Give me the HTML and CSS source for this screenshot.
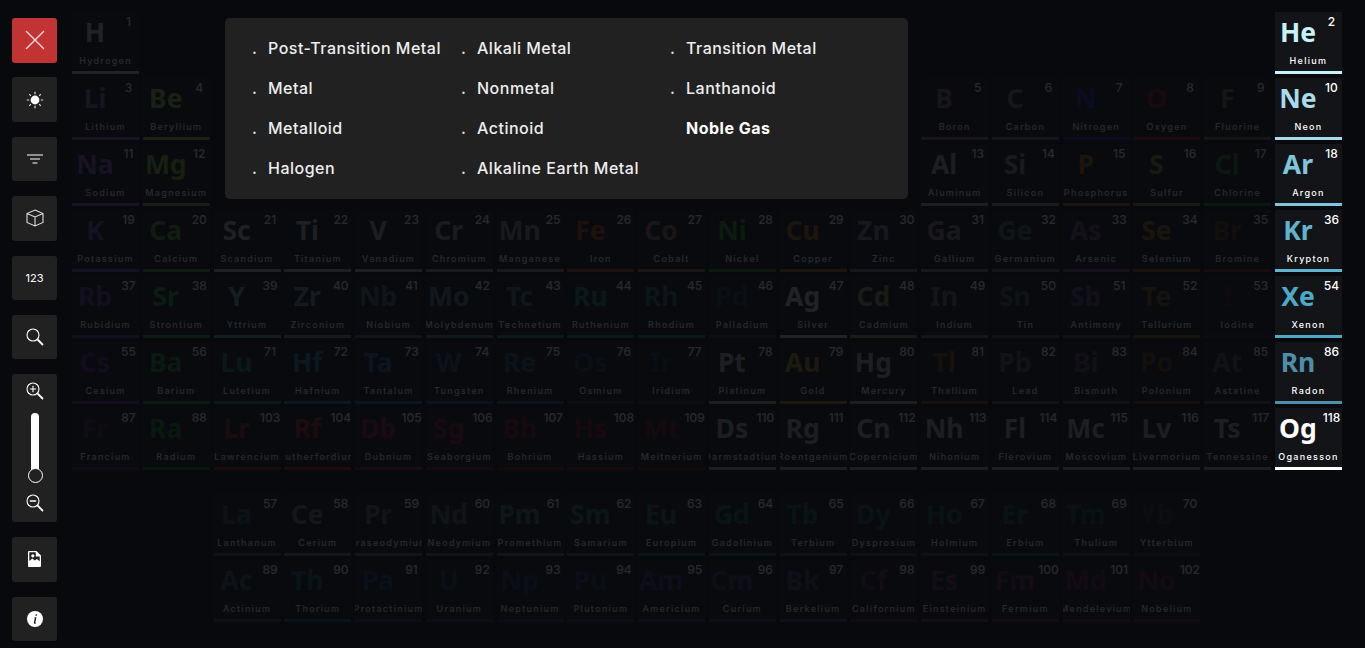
FILE: index.html
```html
<!DOCTYPE html>
<html lang="en">
<head>
<meta charset="utf-8">
<title>Periodic Table</title>
<link rel="stylesheet" href="styles.css">
</head>
<body>
<div class="page">
<aside class="sidebar">
  <button class="tool tool-close"><svg width="22" height="22" viewBox="0 0 22 22"><path d="M2 2 20 20M20 2 2 20" stroke="#f3dcdc" stroke-width="1.4" fill="none"/></svg></button>
  <button class="tool"><svg width="18" height="18" viewBox="0 0 18 18"><circle cx="9" cy="9" r="4.4" fill="#fff"/><path d="M9 .8v2.4M9 14.8v2.4M.8 9h2.4M14.8 9h2.4M3.2 3.2l1.7 1.7M13.1 13.1l1.7 1.7M14.8 3.2l-1.7 1.700M4.9 13.1l-1.7 1.7" stroke="#ddd" stroke-width="1.2"/></svg></button>
  <button class="tool"><svg width="16" height="10" viewBox="0 0 16 10"><path d="M0 1h16M3 5h10M5.500 9h5" stroke="#fff" stroke-width="1.100"/></svg></button>
  <button class="tool"><svg width="18" height="18" viewBox="0 0 18 18" fill="none" stroke="#ddd" stroke-width="1.1"><path d="M9 1 17 4.500v9L9 17 1 13.500v-9zM1 4.500 9 8l8-3.500M9 8v9"/></svg></button>
  <button class="tool tool-text">123</button>
  <button class="tool"><svg width="18" height="18" viewBox="0 0 18 18" fill="none" stroke="#fff"><circle cx="7" cy="7" r="6" stroke-width="1.100"/><path d="M11.500 11.500 17 17" stroke-width="1.800"/></svg></button>
  <div class="tool zoom-panel">
    <svg width="18" height="18" viewBox="0 0 18 18" fill="none" stroke="#fff"><circle cx="7" cy="7" r="6" stroke-width="1.100"/><path d="M11.500 11.500 17 17" stroke-width="1.800"/><path d="M3.800 7h6.400M7 3.800v6.400" stroke-width="1.100"/></svg>
    <div class="slider"><span class="slider-track"></span><span class="slider-thumb"></span></div>
    <svg width="18" height="18" viewBox="0 0 18 18" fill="none" stroke="#fff"><circle cx="7" cy="7" r="6" stroke-width="1.100"/><path d="M11.500 11.500 17 17" stroke-width="1.800"/><path d="M3.800 7h6.400" stroke-width="1.500"/></svg>
  </div>
  <button class="tool"><svg width="13" height="16" viewBox="0 0 13 16"><path fill="#fff" fill-rule="evenodd" d="M1 0h7.500L13 4.500V15a1 1 0 0 1-1 1H1a1 1 0 0 1-1-1V1a1 1 0 0 1 1-1zM1.300 1.300V10l3-2.500 2.500 2 2-1.500 2.900 2.300V5.400H7.800V1.300z"/><circle cx="4.800" cy="4.800" r="1.600" fill="#fff"/></svg></button>
  <button class="tool"><svg width="16" height="16" viewBox="0 0 16 16"><circle cx="8" cy="8" r="8" fill="#fff"/><path fill="#212121" d="M8.700 3.300h1.400l-.3 1.400H8.400zM8 6.300h1.400l-1 5.300c-.1.300.2.400.6.200l-.1.700c-1.100.5-2.100.4-2-.800l.8-4.700h-.8z"/></svg></button>
</aside>
<main class="table">
  <div class="grid">
    <div class="el dim c-h"><div class="top"><b>H</b><i>1</i></div><p><span>Hydrogen</span></p></div>
    <div class="el hi col-18 c-he"><div class="top"><b>He</b><i>2</i></div><p><span>Helium</span></p></div>
    <div class="el dim c-li"><div class="top"><b>Li</b><i>3</i></div><p><span>Lithium</span></p></div>
    <div class="el dim c-be"><div class="top"><b>Be</b><i>4</i></div><p><span>Beryllium</span></p></div>
    <div class="el dim col-13 c-b"><div class="top"><b>B</b><i>5</i></div><p><span>Boron</span></p></div>
    <div class="el dim c-c"><div class="top"><b>C</b><i>6</i></div><p><span>Carbon</span></p></div>
    <div class="el dim c-n"><div class="top"><b>N</b><i>7</i></div><p><span>Nitrogen</span></p></div>
    <div class="el dim c-o"><div class="top"><b>O</b><i>8</i></div><p><span>Oxygen</span></p></div>
    <div class="el dim c-f"><div class="top"><b>F</b><i>9</i></div><p><span>Fluorine</span></p></div>
    <div class="el hi c-ne"><div class="top"><b>Ne</b><i>10</i></div><p><span>Neon</span></p></div>
    <div class="el dim c-na"><div class="top"><b>Na</b><i>11</i></div><p><span>Sodium</span></p></div>
    <div class="el dim c-mg"><div class="top"><b>Mg</b><i>12</i></div><p><span>Magnesium</span></p></div>
    <div class="el dim col-13 c-al"><div class="top"><b>Al</b><i>13</i></div><p><span>Aluminum</span></p></div>
    <div class="el dim c-si"><div class="top"><b>Si</b><i>14</i></div><p><span>Silicon</span></p></div>
    <div class="el dim c-p"><div class="top"><b>P</b><i>15</i></div><p><span>Phosphorus</span></p></div>
    <div class="el dim c-s"><div class="top"><b>S</b><i>16</i></div><p><span>Sulfur</span></p></div>
    <div class="el dim c-cl"><div class="top"><b>Cl</b><i>17</i></div><p><span>Chlorine</span></p></div>
    <div class="el hi c-ar"><div class="top"><b>Ar</b><i>18</i></div><p><span>Argon</span></p></div>
    <div class="el dim c-k"><div class="top"><b>K</b><i>19</i></div><p><span>Potassium</span></p></div>
    <div class="el dim c-ca"><div class="top"><b>Ca</b><i>20</i></div><p><span>Calcium</span></p></div>
    <div class="el dim c-sc"><div class="top"><b>Sc</b><i>21</i></div><p><span>Scandium</span></p></div>
    <div class="el dim c-ti"><div class="top"><b>Ti</b><i>22</i></div><p><span>Titanium</span></p></div>
    <div class="el dim c-v"><div class="top"><b>V</b><i>23</i></div><p><span>Vanadium</span></p></div>
    <div class="el dim c-cr"><div class="top"><b>Cr</b><i>24</i></div><p><span>Chromium</span></p></div>
    <div class="el dim c-mn"><div class="top"><b>Mn</b><i>25</i></div><p><span>Manganese</span></p></div>
    <div class="el dim c-fe"><div class="top"><b>Fe</b><i>26</i></div><p><span>Iron</span></p></div>
    <div class="el dim c-co"><div class="top"><b>Co</b><i>27</i></div><p><span>Cobalt</span></p></div>
    <div class="el dim c-ni"><div class="top"><b>Ni</b><i>28</i></div><p><span>Nickel</span></p></div>
    <div class="el dim c-cu"><div class="top"><b>Cu</b><i>29</i></div><p><span>Copper</span></p></div>
    <div class="el dim c-zn"><div class="top"><b>Zn</b><i>30</i></div><p><span>Zinc</span></p></div>
    <div class="el dim c-ga"><div class="top"><b>Ga</b><i>31</i></div><p><span>Gallium</span></p></div>
    <div class="el dim c-ge"><div class="top"><b>Ge</b><i>32</i></div><p><span>Germanium</span></p></div>
    <div class="el dim c-as"><div class="top"><b>As</b><i>33</i></div><p><span>Arsenic</span></p></div>
    <div class="el dim c-se"><div class="top"><b>Se</b><i>34</i></div><p><span>Selenium</span></p></div>
    <div class="el dim c-br"><div class="top"><b>Br</b><i>35</i></div><p><span>Bromine</span></p></div>
    <div class="el hi c-kr"><div class="top"><b>Kr</b><i>36</i></div><p><span>Krypton</span></p></div>
    <div class="el dim c-rb"><div class="top"><b>Rb</b><i>37</i></div><p><span>Rubidium</span></p></div>
    <div class="el dim c-sr"><div class="top"><b>Sr</b><i>38</i></div><p><span>Strontium</span></p></div>
    <div class="el dim c-y"><div class="top"><b>Y</b><i>39</i></div><p><span>Yttrium</span></p></div>
    <div class="el dim c-zr"><div class="top"><b>Zr</b><i>40</i></div><p><span>Zirconium</span></p></div>
    <div class="el dim c-nb"><div class="top"><b>Nb</b><i>41</i></div><p><span>Niobium</span></p></div>
    <div class="el dim c-mo"><div class="top"><b>Mo</b><i>42</i></div><p><span>Molybdenum</span></p></div>
    <div class="el dim c-tc"><div class="top"><b>Tc</b><i>43</i></div><p><span>Technetium</span></p></div>
    <div class="el dim c-ru"><div class="top"><b>Ru</b><i>44</i></div><p><span>Ruthenium</span></p></div>
    <div class="el dim c-rh"><div class="top"><b>Rh</b><i>45</i></div><p><span>Rhodium</span></p></div>
    <div class="el dim c-pd"><div class="top"><b>Pd</b><i>46</i></div><p><span>Palladium</span></p></div>
    <div class="el dim c-ag"><div class="top"><b>Ag</b><i>47</i></div><p><span>Silver</span></p></div>
    <div class="el dim c-cd"><div class="top"><b>Cd</b><i>48</i></div><p><span>Cadmium</span></p></div>
    <div class="el dim c-in"><div class="top"><b>In</b><i>49</i></div><p><span>Indium</span></p></div>
    <div class="el dim c-sn"><div class="top"><b>Sn</b><i>50</i></div><p><span>Tin</span></p></div>
    <div class="el dim c-sb"><div class="top"><b>Sb</b><i>51</i></div><p><span>Antimony</span></p></div>
    <div class="el dim c-te"><div class="top"><b>Te</b><i>52</i></div><p><span>Tellurium</span></p></div>
    <div class="el dim c-i"><div class="top"><b>I</b><i>53</i></div><p><span>Iodine</span></p></div>
    <div class="el hi c-xe"><div class="top"><b>Xe</b><i>54</i></div><p><span>Xenon</span></p></div>
    <div class="el dim c-cs"><div class="top"><b>Cs</b><i>55</i></div><p><span>Cesium</span></p></div>
    <div class="el dim c-ba"><div class="top"><b>Ba</b><i>56</i></div><p><span>Barium</span></p></div>
    <div class="el dim c-lu"><div class="top"><b>Lu</b><i>71</i></div><p><span>Lutetium</span></p></div>
    <div class="el dim c-hf"><div class="top"><b>Hf</b><i>72</i></div><p><span>Hafnium</span></p></div>
    <div class="el dim c-ta"><div class="top"><b>Ta</b><i>73</i></div><p><span>Tantalum</span></p></div>
    <div class="el dim c-w"><div class="top"><b>W</b><i>74</i></div><p><span>Tungsten</span></p></div>
    <div class="el dim c-re"><div class="top"><b>Re</b><i>75</i></div><p><span>Rhenium</span></p></div>
    <div class="el dim c-os"><div class="top"><b>Os</b><i>76</i></div><p><span>Osmium</span></p></div>
    <div class="el dim c-ir"><div class="top"><b>Ir</b><i>77</i></div><p><span>Iridium</span></p></div>
    <div class="el dim c-pt"><div class="top"><b>Pt</b><i>78</i></div><p><span>Platinum</span></p></div>
    <div class="el dim c-au"><div class="top"><b>Au</b><i>79</i></div><p><span>Gold</span></p></div>
    <div class="el dim c-hg"><div class="top"><b>Hg</b><i>80</i></div><p><span>Mercury</span></p></div>
    <div class="el dim c-tl"><div class="top"><b>Tl</b><i>81</i></div><p><span>Thallium</span></p></div>
    <div class="el dim c-pb"><div class="top"><b>Pb</b><i>82</i></div><p><span>Lead</span></p></div>
    <div class="el dim c-bi"><div class="top"><b>Bi</b><i>83</i></div><p><span>Bismuth</span></p></div>
    <div class="el dim c-po"><div class="top"><b>Po</b><i>84</i></div><p><span>Polonium</span></p></div>
    <div class="el dim c-at"><div class="top"><b>At</b><i>85</i></div><p><span>Astatine</span></p></div>
    <div class="el hi c-rn"><div class="top"><b>Rn</b><i>86</i></div><p><span>Radon</span></p></div>
    <div class="el dim c-fr"><div class="top"><b>Fr</b><i>87</i></div><p><span>Francium</span></p></div>
    <div class="el dim c-ra"><div class="top"><b>Ra</b><i>88</i></div><p><span>Radium</span></p></div>
    <div class="el dim c-lr"><div class="top"><b>Lr</b><i>103</i></div><p><span>Lawrencium</span></p></div>
    <div class="el dim c-rf"><div class="top"><b>Rf</b><i>104</i></div><p><span>Rutherfordium</span></p></div>
    <div class="el dim c-db"><div class="top"><b>Db</b><i>105</i></div><p><span>Dubnium</span></p></div>
    <div class="el dim c-sg"><div class="top"><b>Sg</b><i>106</i></div><p><span>Seaborgium</span></p></div>
    <div class="el dim c-bh"><div class="top"><b>Bh</b><i>107</i></div><p><span>Bohrium</span></p></div>
    <div class="el dim c-hs"><div class="top"><b>Hs</b><i>108</i></div><p><span>Hassium</span></p></div>
    <div class="el dim c-mt"><div class="top"><b>Mt</b><i>109</i></div><p><span>Meitnerium</span></p></div>
    <div class="el dim c-gray"><div class="top"><b>Ds</b><i>110</i></div><p><span>Darmstadtium</span></p></div>
    <div class="el dim c-gray"><div class="top"><b>Rg</b><i>111</i></div><p><span>Roentgenium</span></p></div>
    <div class="el dim c-gray"><div class="top"><b>Cn</b><i>112</i></div><p><span>Copernicium</span></p></div>
    <div class="el dim c-gray"><div class="top"><b>Nh</b><i>113</i></div><p><span>Nihonium</span></p></div>
    <div class="el dim c-gray"><div class="top"><b>Fl</b><i>114</i></div><p><span>Flerovium</span></p></div>
    <div class="el dim c-gray"><div class="top"><b>Mc</b><i>115</i></div><p><span>Moscovium</span></p></div>
    <div class="el dim c-gray"><div class="top"><b>Lv</b><i>116</i></div><p><span>Livermorium</span></p></div>
    <div class="el dim c-gray"><div class="top"><b>Ts</b><i>117</i></div><p><span>Tennessine</span></p></div>
    <div class="el hi c-og"><div class="top"><b>Og</b><i>118</i></div><p><span>Oganesson</span></p></div>
  </div>
  <div class="grid grid-f">
    <div class="el dim col-3 c-la"><div class="top"><b>La</b><i>57</i></div><p><span>Lanthanum</span></p></div>
    <div class="el dim c-ce"><div class="top"><b>Ce</b><i>58</i></div><p><span>Cerium</span></p></div>
    <div class="el dim c-pr"><div class="top"><b>Pr</b><i>59</i></div><p><span>Praseodymium</span></p></div>
    <div class="el dim c-nd"><div class="top"><b>Nd</b><i>60</i></div><p><span>Neodymium</span></p></div>
    <div class="el dim c-pm"><div class="top"><b>Pm</b><i>61</i></div><p><span>Promethium</span></p></div>
    <div class="el dim c-sm"><div class="top"><b>Sm</b><i>62</i></div><p><span>Samarium</span></p></div>
    <div class="el dim c-eu"><div class="top"><b>Eu</b><i>63</i></div><p><span>Europium</span></p></div>
    <div class="el dim c-gd"><div class="top"><b>Gd</b><i>64</i></div><p><span>Gadolinium</span></p></div>
    <div class="el dim c-tb"><div class="top"><b>Tb</b><i>65</i></div><p><span>Terbium</span></p></div>
    <div class="el dim c-dy"><div class="top"><b>Dy</b><i>66</i></div><p><span>Dysprosium</span></p></div>
    <div class="el dim c-ho"><div class="top"><b>Ho</b><i>67</i></div><p><span>Holmium</span></p></div>
    <div class="el dim c-er"><div class="top"><b>Er</b><i>68</i></div><p><span>Erbium</span></p></div>
    <div class="el dim c-tm"><div class="top"><b>Tm</b><i>69</i></div><p><span>Thulium</span></p></div>
    <div class="el dim c-yb"><div class="top"><b>Yb</b><i>70</i></div><p><span>Ytterbium</span></p></div>
    <div class="el dim col-3 c-ac"><div class="top"><b>Ac</b><i>89</i></div><p><span>Actinium</span></p></div>
    <div class="el dim c-th"><div class="top"><b>Th</b><i>90</i></div><p><span>Thorium</span></p></div>
    <div class="el dim c-pa"><div class="top"><b>Pa</b><i>91</i></div><p><span>Protactinium</span></p></div>
    <div class="el dim c-u"><div class="top"><b>U</b><i>92</i></div><p><span>Uranium</span></p></div>
    <div class="el dim c-np"><div class="top"><b>Np</b><i>93</i></div><p><span>Neptunium</span></p></div>
    <div class="el dim c-pu"><div class="top"><b>Pu</b><i>94</i></div><p><span>Plutonium</span></p></div>
    <div class="el dim c-am"><div class="top"><b>Am</b><i>95</i></div><p><span>Americium</span></p></div>
    <div class="el dim c-cm"><div class="top"><b>Cm</b><i>96</i></div><p><span>Curium</span></p></div>
    <div class="el dim c-bk"><div class="top"><b>Bk</b><i>97</i></div><p><span>Berkelium</span></p></div>
    <div class="el dim c-cf"><div class="top"><b>Cf</b><i>98</i></div><p><span>Californium</span></p></div>
    <div class="el dim c-es"><div class="top"><b>Es</b><i>99</i></div><p><span>Einsteinium</span></p></div>
    <div class="el dim c-fm"><div class="top"><b>Fm</b><i>100</i></div><p><span>Fermium</span></p></div>
    <div class="el dim c-md"><div class="top"><b>Md</b><i>101</i></div><p><span>Mendelevium</span></p></div>
    <div class="el dim c-no"><div class="top"><b>No</b><i>102</i></div><p><span>Nobelium</span></p></div>
  </div>
</main>
<ul class="legend">
  <li><span class="dot">.</span>Post-Transition Metal</li>
  <li><span class="dot">.</span>Alkali Metal</li>
  <li><span class="dot">.</span>Transition Metal</li>
  <li><span class="dot">.</span>Metal</li>
  <li><span class="dot">.</span>Nonmetal</li>
  <li><span class="dot">.</span>Lanthanoid</li>
  <li><span class="dot">.</span>Metalloid</li>
  <li><span class="dot">.</span>Actinoid</li>
  <li class="active"><span class="dot"></span>Noble Gas</li>
  <li><span class="dot">.</span>Halogen</li>
  <li><span class="dot">.</span>Alkaline Earth Metal</li>
</ul>
</div>
</body>
</html>
```
FILE: styles.css
```css
* { box-sizing: border-box; }
html, body { margin: 0; height: 100%; overflow: hidden; }
body { background: #07090c; color: #fff; font-family: "Inter", "Liberation Sans", sans-serif; }
.page { display: flex; align-items: flex-start; height: 648px; padding-left: 12px; position: relative; }

.sidebar { width: 45px; flex: none; margin-top: 18px; display: flex; flex-direction: column; gap: 14.9px; }
.tool { width: 45px; height: 44.5px; flex: none; border: 0; padding: 0; border-radius: 3px; background: #212121; color: #fff; display: flex; align-items: center; justify-content: center; font-family: inherit; }
.tool-close { background: #c23434; }
.tool-text { font-size: 11px; font-weight: 400; }
.zoom-panel { height: 148px; flex-direction: column; justify-content: flex-start; padding-top: 8px; }
.slider { height: 70px; width: 16px; margin: 13px 0 11px; display: flex; flex-direction: column; align-items: center; position: relative; left: .5px; }
.slider-track { width: 8px; height: 58px; background: #fff; border-radius: 4px 4px 0 0; }
.slider-thumb { width: 15px; height: 15px; margin-top: -3px; border-radius: 50%; border: 1.200px solid #fff; background: #212121; flex: none; }

.table { width: 1270px; margin: 12px 0 0 15px; flex: none; }
.grid { display: grid; grid-template-columns: repeat(18, 1fr); column-gap: 3.72px; row-gap: 4px; }
.grid-f { margin-top: 24px; }
.col-3 { grid-column-start: 3; }
.col-13 { grid-column-start: 13; }
.col-18 { grid-column-start: 18; }

.el { height: 62px; background: #131417; border-bottom: 3px solid var(--c); overflow: hidden; }
.dim { opacity: .13; }
.top { display: flex; height: 43px; }
.top b { flex: 0 0 46px; text-align: center; font: 700 26.5px/41px "Noto Sans", sans-serif; color: var(--c); }
.top i { flex: 1; text-align: center; font: 500 12px/20px "Inter", sans-serif; font-style: normal; color: #fff; }
.el p { margin: 0; height: 15px; display: flex; justify-content: center; overflow: hidden; font-size: 9px; line-height: 11px; font-weight: 500; letter-spacing: 1.3px; color: #fff; white-space: nowrap; }
.el p span { flex: none; }

.legend { position: absolute; left: 225px; top: 18px; width: 683px; height: 181px; margin: 0; padding: 10px 0 0 27px; list-style: none; background: #212121; border-radius: 5px; display: grid; grid-template-columns: repeat(3, 209px); grid-auto-rows: 40px; }
.legend li { display: flex; align-items: center; font-size: 16px; font-weight: 500; letter-spacing: .5px; color: #eee; white-space: nowrap; }
.legend .active { font-weight: 700; color: #fff; }
.dot { width: 16px; flex: none; font-weight: 500; }

.c-gray { --c: #a8a8ac; }
.c-h { --c: #c8ccd2; } .c-he { --c: #c8f2fa; } .c-ne { --c: #a9dbea; } .c-ar { --c: #7fc6da; } .c-kr { --c: #5fb4cf; } .c-xe { --c: #4fa8c6; } .c-rn { --c: #4f8ea8; } .c-og { --c: #fff; }
.c-li { --c: #9060c8; } .c-na { --c: #8a50c8; } .c-k { --c: #6e48b8; } .c-rb { --c: #6238a0; } .c-cs { --c: #5c2a88; } .c-fr { --c: #4e1c58; }
.c-be { --c: #9ab848; } .c-mg { --c: #78b030; } .c-ca { --c: #4e9c30; } .c-sr { --c: #2c9a3a; } .c-ba { --c: #1f8a30; } .c-ra { --c: #1c8028; }
.c-sc { --c: #b8b8c0; } .c-ti { --c: #b4b4b4; } .c-v { --c: #a8a8b0; } .c-cr { --c: #90949f; } .c-mn { --c: #88808f; }
.c-fe { --c: #b84a18; } .c-co { --c: #986a64; } .c-ni { --c: #2f9030; } .c-cu { --c: #a06818; } .c-zn { --c: #80809a; }
.c-y { --c: #70a4ac; } .c-zr { --c: #6c9094; } .c-nb { --c: #4e687e; } .c-mo { --c: #4e7e88; } .c-tc { --c: #2e7e7e; } .c-ru { --c: #1a806e; } .c-rh { --c: #1e7070; } .c-pd { --c: #183a3a; } .c-ag { --c: #c8c8c8; } .c-cd { --c: #9c8c5c; }
.c-lu { --c: #208060; } .c-hf { --c: #2a7a98; } .c-ta { --c: #2a6a98; } .c-w { --c: #205a80; } .c-re { --c: #1e5a70; } .c-os { --c: #1e3a5a; } .c-ir { --c: #1a3050; } .c-pt { --c: #acacb4; } .c-au { --c: #ac8c10; } .c-hg { --c: #acacb4; }
.c-lr { --c: #a02030; } .c-rf { --c: #b02028; } .c-db { --c: #9a1838; } .c-sg { --c: #8a1830; } .c-bh { --c: #801020; } .c-hs { --c: #801020; } .c-mt { --c: #700a18; }
.c-b { --c: #846660; } .c-c { --c: #6e6e80; } .c-n { --c: #1a2a9c; } .c-o { --c: #a01818; } .c-f { --c: #687040; } .c-cl { --c: #207a30; }
.c-al { --c: #acacac; } .c-si { --c: #9c8880; } .c-p { --c: #b06010; } .c-s { --c: #8a9020; }
.c-ga { --c: #8c7c7c; } .c-ge { --c: #4e6868; } .c-as { --c: #6a4a90; } .c-se { --c: #a06010; } .c-br { --c: #702018; }
.c-in { --c: #706a70; } .c-sn { --c: #505a5a; } .c-sb { --c: #604870; } .c-te { --c: #805a10; } .c-i { --c: #3c1832; }
.c-tl { --c: #804818; } .c-pb { --c: #605858; } .c-bi { --c: #604060; } .c-po { --c: #603810; } .c-at { --c: #585058; }
.c-la { --c: #305868; } .c-ce { --c: #707060; } .c-pr { --c: #606050; } .c-nd { --c: #586058; } .c-pm { --c: #4a7060; } .c-sm { --c: #307050; } .c-eu { --c: #207050; } .c-gd { --c: #186850; } .c-tb { --c: #186048; } .c-dy { --c: #185a50; } .c-ho { --c: #185848; } .c-er { --c: #106040; } .c-tm { --c: #105038; } .c-yb { --c: #104028; }
.c-ac { --c: #404868; } .c-th { --c: #205a70; } .c-pa { --c: #203f70; } .c-u { --c: #20386a; } .c-np { --c: #1a3070; } .c-pu { --c: #243060; } .c-am { --c: #3a3070; } .c-cm { --c: #403070; } .c-bk { --c: #4a3070; } .c-cf { --c: #502a60; } .c-es { --c: #602a60; } .c-fm { --c: #702050; } .c-md { --c: #701848; } .c-no { --c: #701838; }
```
